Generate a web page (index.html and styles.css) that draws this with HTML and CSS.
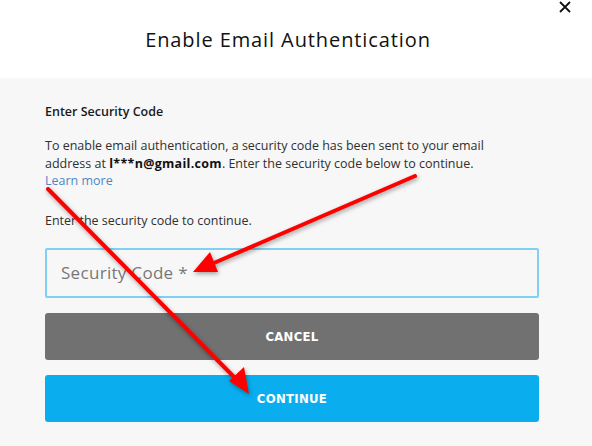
FILE: index.html
```html
<!DOCTYPE html>
<html>
<head>
<meta charset="utf-8">
<link rel="stylesheet" href="styles.css">
</head>
<body>
<div class="modal">
  <header class="head">
    <button class="close" aria-label="Close">
      <svg width="12" height="12" viewBox="0 0 12 12"><path d="M1 1L11 11M11 1L1 11" stroke="#111" stroke-width="1.8" fill="none"/></svg>
    </button>
    <h1 class="title">Enable Email Authentication</h1>
  </header>
  <main class="body">
    <h2 class="sub">Enter Security Code</h2>
    <p class="desc">To enable email authentication, a security code has been sent to your email address at <b>l***n@gmail.com</b>. Enter the security code below to continue. <a class="link" href="#">Learn more</a></p>
    <p class="hint">Enter the security code to continue.</p>
    <div class="field"><span class="placeholder">Security Code *</span></div>
    <button class="btn cancel">CANCEL</button>
    <button class="btn continue">CONTINUE</button>
  </main>
  <svg class="arrows" width="592" height="446" viewBox="0 0 592 446">
    <g class="arrow">
      <line x1="415" y1="176" x2="207" y2="266" stroke="#f00" stroke-width="4" stroke-linecap="round"/>
      <polygon points="193,272 210,252 218,272" fill="#f00"/>
    </g>
    <g class="arrow">
      <line x1="48" y1="189" x2="238" y2="381" stroke="#f00" stroke-width="4" stroke-linecap="round"/>
      <polygon points="249,394 229,381 244,367" fill="#f00"/>
    </g>
  </svg>
</div>
</body>
</html>
```
FILE: styles.css
```css
html, body {
  margin: 0;
  padding: 0;
  background: #f7f7f7;
}
body {
  font-family: "Open Sans", "DejaVu Sans", sans-serif;
  color: #202020;
}
.modal {
  position: relative;
  width: 592px;
  height: 446px;
  overflow: hidden;
}
.head {
  background: #fff;
  height: 78px;
  display: flex;
  align-items: center;
  justify-content: center;
  padding-right: 16px;
}
.title {
  margin: 0;
  font-weight: 400;
  font-size: 20px;
  letter-spacing: 0.9px;
  color: #111;
}
.close {
  position: absolute;
  top: 0;
  right: 20px;
  width: 14px;
  height: 14px;
  border: 0;
  padding: 0;
  background: none;
  display: flex;
  align-items: center;
  justify-content: center;
}
.body {
  padding: 25px 53px 0 45px;
  display: flex;
  flex-direction: column;
}
.sub {
  margin: 0;
  font-size: 12.5px;
  font-weight: 600;
  line-height: 18px;
  color: #1a1a1a;
}
.desc {
  margin: 16px 0 0;
  max-width: 482px;
  font-size: 12.5px;
  line-height: 17.5px;
  color: #303030;
}
.desc b {
  font-weight: 700;
  color: #111;
  letter-spacing: 0.3px;
}
.link {
  color: #4f86c6;
  text-decoration: none;
  white-space: nowrap;
}
.hint {
  margin: 22px 0 0;
  font-size: 12.5px;
  line-height: 18px;
  color: #303030;
}
.field {
  margin-top: 18px;
  height: 46px;
  border: 2px solid #7fd0f2;
  border-radius: 2px;
  display: flex;
  align-items: center;
  padding-left: 14px;
}
.placeholder {
  font-size: 17px;
  color: #777;
  letter-spacing: 0.3px;
}
.btn {
  border: 0;
  border-radius: 3px;
  height: 47px;
  color: #fff;
  font-family: "DejaVu Sans Condensed", "DejaVu Sans", sans-serif;
  font-weight: 700;
  font-size: 13px;
  letter-spacing: 0.3px;
  padding: 0;
  width: 100%;
}
.cancel {
  margin-top: 15px;
  background: #717171;
}
.continue {
  margin-top: 15px;
  background: #0aaeef;
}
.arrows {
  position: absolute;
  left: 0;
  top: 0;
  pointer-events: none;
}
.arrow {
  filter: drop-shadow(1px 2px 2px rgba(0,0,0,0.35));
}
```
